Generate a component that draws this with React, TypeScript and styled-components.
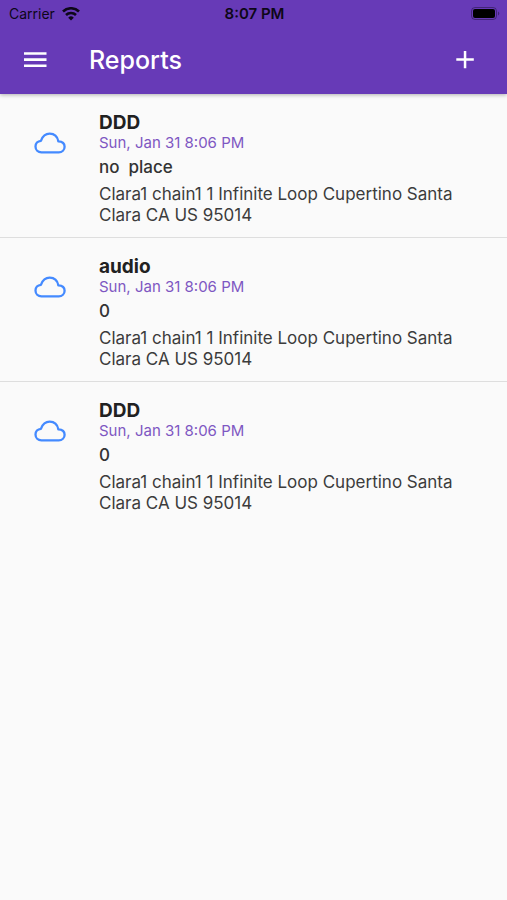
import React from "react";
import styled, { createGlobalStyle } from "styled-components";

const GlobalStyle = createGlobalStyle`
  * { box-sizing: border-box; }
  body { margin: 0; background: #fafafa; color: #212121; font-family: Inter, "Liberation Sans", sans-serif; }
`;

const Page = styled.div`
  min-height: 100vh;
  display: flex;
  flex-direction: column;
`;

const Header = styled.header`
  background: #673ab7;
  box-shadow: 0 1px 4px rgba(0, 0, 0, 0.3);
`;

const StatusBar = styled.div`
  height: 27px;
  padding: 0 7px 0 9px;
  display: grid;
  grid-template-columns: 1fr auto 1fr;
  align-items: center;
  color: #0d0718;
  font-size: 14px;
  line-height: 20px;
`;

const Carrier = styled.div`
  display: flex;
  align-items: center;
  gap: 7px;
`;

const Clock = styled.time`
  font-size: 15px;
  font-weight: 600;
`;

const Battery = styled.svg`
  justify-self: end;
`;

const Toolbar = styled.div`
  height: 67px;
  padding: 0 23px 2px;
  display: flex;
  align-items: center;
  color: #fff;
`;

const IconButton = styled.button`
  display: flex;
  padding: 0;
  border: 0;
  background: none;
  color: inherit;
  cursor: pointer;
`;

const Title = styled.h1`
  flex: 1;
  margin: 0 0 0 42px;
  font-size: 25px;
  line-height: 32px;
  font-weight: 500;
`;

const ReportList = styled.ul`
  margin: 0;
  padding: 0;
  list-style: none;
`;

const ReportItem = styled.li`
  display: grid;
  grid-template-columns: 32px 1fr;
  column-gap: 33px;
  padding: 17px 34px 11px;
  & + & { border-top: 1px solid #dedede; }
`;

const CloudIcon = styled.svg`
  margin-top: 20px;
`;

const Name = styled.h2`
  margin: 0;
  font-size: 19px;
  line-height: 24px;
  font-weight: 700;
`;

const Stamp = styled.time`
  display: block;
  color: #7e57c2;
  font-size: 15px;
  line-height: 16px;
`;

const Place = styled.p`
  margin: 6px 0;
  font-size: 17px;
  line-height: 21px;
  font-weight: 500;
  color: #333;
  white-space: pre-wrap;
`;

const Address = styled.p`
  margin: 0;
  font-size: 17px;
  line-height: 21px;
  color: #3c3c3c;
`;

const reports = [
  { name: "DDD", place: "no  place" },
  { name: "audio", place: "0" },
  { name: "DDD", place: "0" },
];

export default function App() {
  return (
    <Page>
      <GlobalStyle />
      <Header>
        <StatusBar>
          <Carrier>
            Carrier
            <svg width="18" height="14" viewBox="0 0 18 14" fill="none" stroke="currentColor" strokeWidth="2.6" aria-label="Wi-Fi">
              <path d="M1 4.500a11.500 11.500 0 0 1 16 0M4 8a7.200 7.200 0 0 1 10 0" />
              <path d="M9 13.500 6.200 10.700a4 4 0 0 1 5.600 0z" fill="currentColor" stroke="none" />
            </svg>
          </Carrier>
          <Clock>8:07 PM</Clock>
          <Battery width="29" height="13" viewBox="0 0 29 13" fill="none" aria-label="Battery full">
            <rect x="0.500" y="0.500" width="25" height="12" rx="3.500" stroke="currentColor" opacity="0.400" />
            <rect x="2" y="2" width="22" height="9" rx="2" fill="#000" />
            <path d="M27 4.500v4a2.200 2.200 0 0 0 0-4" fill="currentColor" opacity="0.400" />
          </Battery>
        </StatusBar>
        <Toolbar>
          <IconButton type="button" aria-label="Open menu">
            <svg width="24" height="24" viewBox="0 0 24 24" fill="currentColor"><path d="M1 4.200h22.500v2.600H1zM1 10.300h22.500v2.600H1zM1 16.400h22.500V19H1z" /></svg>
          </IconButton>
          <Title>Reports</Title>
          <IconButton type="button" aria-label="Add report">
            <svg width="38" height="32" viewBox="0 0 38 32" fill="currentColor"><path d="M17.800 7h2.500v7.300h7.500v2.500h-7.500v7.500h-2.500v-7.500h-7.500v-2.500h7.500z" /></svg>
          </IconButton>
        </Toolbar>
      </Header>
      <ReportList>
        {reports.map((r, i) => (
          <ReportItem key={i}>
            <CloudIcon width="32" height="24" viewBox="0 0 32 24" fill="none" stroke="#448aff" strokeWidth="2.300" strokeLinejoin="round" aria-hidden="true">
              <path d="M7.500 21.300C4 21.300 1.500 18.700 1.500 15.500c0-3 2.100-5.500 5.400-5.700C8.500 5.600 11.600 2.700 15.700 2.700c4.600 0 7.700 2.900 8.600 7.600 3.800.2 6.300 2.300 6.300 5.400 0 3.200-2.600 5.600-5.800 5.600z" />
            </CloudIcon>
            <div>
              <Name>{r.name}</Name>
              <Stamp>Sun, Jan 31 8:06 PM</Stamp>
              <Place>{r.place}</Place>
              <Address>Clara1 chain1 1 Infinite Loop Cupertino Santa Clara CA US 95014</Address>
            </div>
          </ReportItem>
        ))}
      </ReportList>
    </Page>
  );
}
